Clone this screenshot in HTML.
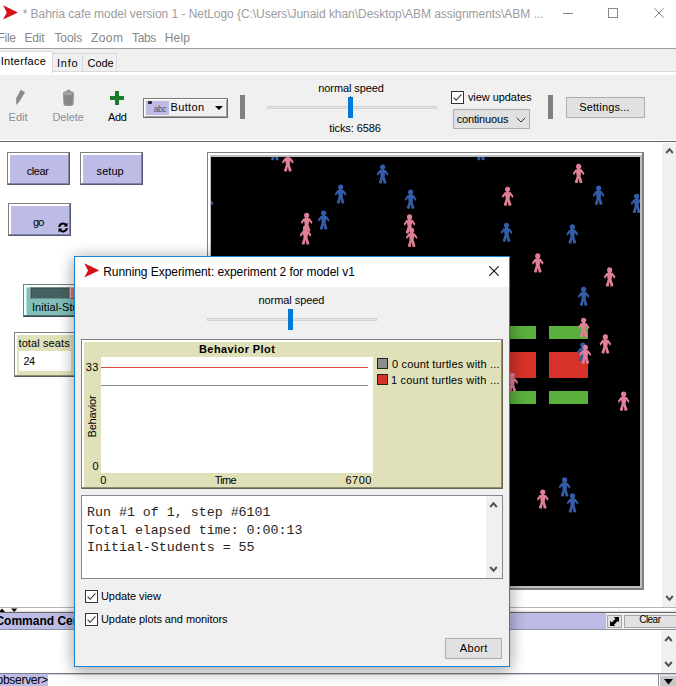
<!DOCTYPE html>
<html><head><meta charset="utf-8">
<style>
*{box-sizing:border-box;margin:0;padding:0}
html,body{width:676px;height:686px;overflow:hidden;background:#fff;font-family:"Liberation Sans","DejaVu Sans",sans-serif;font-size:11px;color:#000}
.abs{position:absolute}
#root{position:relative;width:676px;height:686px;overflow:hidden;background:#fff}
.t{position:absolute;white-space:nowrap;line-height:1}
.nb{position:absolute;background:#bcbce6;border-style:solid;border-width:1px;border-color:#808080 #585874 #585874 #808080;box-shadow:inset -1px -1px 0 #8282aa, inset 2px 2px 0 #fff}
.wb{position:absolute;background:#e1e1e1;border:1px solid #adadad}
.cb{position:absolute;width:13px;height:13px;background:#fff;border:1px solid #333}
.sb{position:absolute;background:#f0f0f0}
</style></head><body><div id="root">

<!-- title bar -->
<svg class="abs" style="left:3px;top:5px" width="15" height="15" viewBox="0 0 15 15"><path d="M0 0.3 L15 7.4 L0 14.6 L3.8 7.4 Z" fill="#d8101a"/></svg>
<div class="t" style="left:22.70px;top:8.00px;font-size:12px;letter-spacing:-0.046px;color:#9c9c9c">* Bahria cafe model version 1 - NetLogo {C:\Users\Junaid khan\Desktop\ABM assignments\ABM ...</div>
<div class="abs" style="left:563px;top:13px;width:10px;height:1px;background:#8a8a8a"></div>
<div class="abs" style="left:608px;top:8px;width:10px;height:10px;border:1px solid #8a8a8a"></div>
<svg class="abs" style="left:654px;top:8px" width="10" height="10" viewBox="0 0 10 10"><path d="M0.3 0.3L9.7 9.7M9.7 0.3L0.3 9.7" stroke="#888" stroke-width="1" fill="none"/></svg>

<!-- menu -->
<div class="t" style="left:-2.50px;top:32.00px;font-size:12px;letter-spacing:-0.267px;color:#868686">File</div><div class="t" style="left:24.40px;top:32.00px;font-size:12px;letter-spacing:-0.133px;color:#868686">Edit</div><div class="t" style="left:54.40px;top:32.00px;font-size:12px;letter-spacing:-0.050px;color:#868686">Tools</div><div class="t" style="left:91.00px;top:32.00px;font-size:12px;letter-spacing:0.400px;color:#868686">Zoom</div><div class="t" style="left:132.00px;top:32.00px;font-size:12px;letter-spacing:-0.333px;color:#868686">Tabs</div><div class="t" style="left:164.70px;top:32.00px;font-size:12px;letter-spacing:0.200px;color:#868686">Help</div>
<div class="abs" style="left:0;top:48px;width:676px;height:1px;background:#a0a0a0"></div>

<!-- tabs -->
<div class="abs" style="left:0;top:49px;width:676px;height:23px;background:#f0f0f0"></div>
<div class="abs" style="left:52px;top:53px;width:31px;height:19px;background:#f0f0f0;border:1px solid #d9d9d9"></div>
<div class="abs" style="left:82px;top:53px;width:35px;height:19px;background:#f0f0f0;border:1px solid #d9d9d9"></div>
<div class="abs" style="left:0;top:71px;width:676px;height:1px;background:#d9d9d9"></div>
<div class="abs" style="left:-1px;top:51px;width:54px;height:22px;background:#fff;border:1px solid #d9d9d9;border-bottom:none"></div>
<div class="t" style="left:0.70px;top:56.00px;font-size:11px;letter-spacing:0.287px;">Interface</div><div class="t" style="left:57.00px;top:58.00px;font-size:11px;letter-spacing:0.733px;">Info</div><div class="t" style="left:87.60px;top:58.00px;font-size:11px;letter-spacing:-0.100px;">Code</div>

<!-- toolbar -->
<div class="abs" style="left:0;top:75px;width:676px;height:65px;background:#f0f0f0"></div>
<div class="abs" style="left:0;top:141px;width:676px;height:1px;background:#646464"></div>
<svg class="abs" style="left:14px;top:89px" width="12" height="17" viewBox="0 0 12 17"><path d="M6.8 0.8 L11 3.2 L5.6 12.2 L2.2 16 L2.2 9.3 Z" fill="#8a8a8a"/></svg>
<div class="t" style="left:8.60px;top:112.00px;font-size:11px;letter-spacing:0.000px;color:#8c8c9a">Edit</div>
<svg class="abs" style="left:62px;top:89px" width="13" height="18" viewBox="0 0 13 18"><path d="M1 4.5 Q1 2 6.5 2 Q12 2 12 4.5 L11.5 15 Q11.5 17 6.5 17 Q1.5 17 1.5 15 Z" fill="#8c8c8c"/><ellipse cx="6.5" cy="2" rx="2" ry="1.2" fill="#8c8c8c"/><ellipse cx="6.5" cy="4.4" rx="4.6" ry="1.5" fill="#a3a3a3"/><path d="M4 7V14.5M6.5 7.5V15M9 7V14.5" stroke="#7a7a7a" stroke-width="0.8"/></svg>
<div class="t" style="left:52.50px;top:112.00px;font-size:11px;letter-spacing:-0.120px;color:#8c8c9a">Delete</div>
<div class="abs" style="left:115px;top:91px;width:4px;height:14px;background:#1b7a2b"></div>
<div class="abs" style="left:110px;top:96px;width:14px;height:4px;background:#1b7a2b"></div>
<div class="t" style="left:107.90px;top:112.00px;font-size:11px;letter-spacing:-0.350px;">Add</div>
<!-- combo -->
<div class="abs" style="left:143px;top:98px;width:85px;height:20px;background:#f0f0f0;border:1px solid;border-color:#7a7a7a #6b6b6b #6b6b6b #7a7a7a;box-shadow:inset 1px 1px 0 #fff, inset -1px -1px 0 #a0a0a0"></div>
<div class="abs" style="left:146px;top:101px;width:23px;height:14px;background:#bcbce6"></div>
<div class="abs" style="left:148px;top:101px;width:4px;height:3px;background:#223;border-radius:1px"></div>
<div class="t" style="left:153.70px;top:105.00px;font-size:8.5px;letter-spacing:-0.500px;color:#505074">abc</div><div class="t" style="left:170.60px;top:102.00px;font-size:11px;letter-spacing:0.320px;">Button</div>
<svg class="abs" style="left:214px;top:105px" width="10" height="6" viewBox="0 0 10 6"><path d="M1 1H9L5 5Z" fill="#000"/></svg>
<div class="abs" style="left:240px;top:95px;width:5px;height:24px;background:#808080"></div>
<!-- speed slider -->
<div class="t" style="left:318.30px;top:83.00px;font-size:11px;letter-spacing:-0.100px;">normal speed</div>
<div class="abs" style="left:267px;top:106px;width:170px;height:3px;background:#e6e6e6;border:1px solid #d2d2d2"></div>
<div class="abs" style="left:348px;top:97px;width:5px;height:21px;background:#0078d7"></div>
<div class="abs" style="left:350px;top:96px;width:1px;height:1px;background:#4a5a78"></div>
<div class="t" style="left:329.20px;top:123.00px;font-size:11px;letter-spacing:-0.080px;">ticks: 6586</div>
<!-- view updates -->
<div class="cb" style="left:451px;top:91px"></div>
<svg class="abs" style="left:451px;top:91px" width="13" height="13" viewBox="0 0 13 13"><path d="M2.6 6.6L5.2 9.3L10.4 3.3" stroke="#333" stroke-width="1.05" fill="none"/></svg>
<div class="t" style="left:467.90px;top:92.00px;font-size:11px;letter-spacing:-0.055px;">view updates</div>
<div class="wb" style="left:453px;top:109px;width:77px;height:20px"></div>
<div class="t" style="left:456.70px;top:114.00px;font-size:11px;letter-spacing:-0.167px;">continuous</div>
<svg class="abs" style="left:516px;top:117px" width="10" height="6" viewBox="0 0 10 6"><path d="M0.7 0.7L5 5L9.3 0.7" stroke="#333" stroke-width="1" fill="none"/></svg>
<div class="abs" style="left:548px;top:95px;width:5px;height:24px;background:#808080"></div>
<div class="wb" style="left:566px;top:97px;width:79px;height:21px"></div>
<div class="t" style="left:579.20px;top:102.00px;font-size:11px;letter-spacing:0.140px;">Settings...</div>

<!-- main scrollbar -->
<div class="sb" style="left:662px;top:143px;width:14px;height:464px"></div>
<svg class="abs" style="left:665px;top:147px" width="9" height="7" viewBox="0 0 9 7"><path d="M1.2 6L4.5 2.2L7.8 6" stroke="#505050" stroke-width="2" fill="none"/></svg>
<svg class="abs" style="left:665px;top:595px" width="9" height="7" viewBox="0 0 9 7"><path d="M1.2 1L4.5 4.8L7.8 1" stroke="#505050" stroke-width="2" fill="none"/></svg>

<!-- widgets -->
<div class="nb" style="left:7px;top:152px;width:63px;height:33px"></div>
<div class="t" style="left:26.80px;top:166.00px;font-size:11px;letter-spacing:-0.450px;">clear</div>
<div class="nb" style="left:80px;top:152px;width:63px;height:33px"></div>
<div class="t" style="left:96.60px;top:166.00px;font-size:11px;letter-spacing:0.050px;">setup</div>
<div class="nb" style="left:8px;top:203px;width:63px;height:33px"></div>
<div class="t" style="left:33.00px;top:217.00px;font-size:11px;letter-spacing:-0.900px;">go</div>
<svg class="abs" style="left:58px;top:222px" width="10" height="11" viewBox="0 0 10 11"><path d="M1.2 5 A3.8 3.8 0 0 1 8 3 M8.8 6 A3.8 3.8 0 0 1 2 8" stroke="#000" stroke-width="2" fill="none"/><path d="M9.5 0.5V4.5H5.5Z M0.5 10.5V6.5H4.5Z" fill="#000"/></svg>

<!-- slider widget -->
<div class="abs" style="left:23px;top:284px;width:70px;height:33px;background:#83beba;border:1px solid;border-color:#7a7a7a #3c4846 #3c4846 #7a7a7a;box-shadow:inset -1px -1px 0 #4f7572, inset 2px 2px 0 #f2ffff, inset 3px 3px 0 #a8e6e2"></div>
<div class="abs" style="left:30px;top:287px;width:40px;height:12px;background:#446360;border:1px solid;border-color:#7f8a88 #6a908c #6a908c #7f8a88;box-shadow:inset 1px 1px 0 #3a5552"></div>
<div class="abs" style="left:70px;top:287px;width:6px;height:12px;background:#e07474;border:1px solid;border-color:#f0b0b0 #a04a4a #a04a4a #f0b0b0"></div>
<div class="t" style="left:31.90px;top:302.00px;font-size:11px;letter-spacing:0.093px;">Initial-Students</div>
<!-- monitor -->
<div class="abs" style="left:14px;top:332px;width:70px;height:45px;background:#e1e1b9;border:1px solid;border-color:#808080 #5a5a50 #5a5a50 #808080;box-shadow:inset -1px -1px 0 #8e8e74, inset 2px 2px 0 #fff"></div>
<div class="t" style="left:18.50px;top:338.00px;font-size:11px;letter-spacing:0.100px;">total seats</div>
<div class="abs" style="left:19px;top:351px;width:52px;height:20px;background:#fff"></div>
<div class="t" style="left:23.40px;top:356.00px;font-size:11px;letter-spacing:-0.400px;">24</div>

<!-- view -->
<div class="abs" style="left:207px;top:152px;width:437px;height:438px;background:#808080"></div>
<div class="abs" style="left:208px;top:153px;width:434px;height:435px;background:#fff"></div>
<div class="abs" style="left:210px;top:155px;width:432px;height:433px;background:#bebebe"></div>
<svg class="abs" style="left:211px;top:157px" width="429" height="429" viewBox="0 0 429 429">

<rect width="429" height="429" fill="#000"/>
<rect x="286" y="169" width="39" height="13" fill="#59b03c"/><rect x="338" y="169" width="39" height="13" fill="#59b03c"/>
<rect x="286" y="195" width="39" height="26" fill="#d73229"/><rect x="338" y="195" width="39" height="26" fill="#d73229"/>
<rect x="286" y="234" width="39" height="13" fill="#59b03c"/><rect x="338" y="234" width="39" height="13" fill="#59b03c"/>
<path transform="translate(54.1 -16.3) scale(0.0650)" fill="#345da9" d="M110 45a40 40 0 1 1 80 0a40 40 0 1 1-80 0ZM195 90L180 195L210 285L195 300L165 300L150 225L135 300L105 300L90 285L120 195L105 90ZM127 79L172 79L172 94L127 94ZM195 90L240 150L225 180L165 105ZM135 105L75 180L60 150L105 90Z"/>
<path transform="translate(67.1 -5.0) scale(0.0650)" fill="#e07f96" d="M110 45a40 40 0 1 1 80 0a40 40 0 1 1-80 0ZM195 90L180 195L210 285L195 300L165 300L150 225L135 300L105 300L90 285L120 195L105 90ZM127 79L172 79L172 94L127 94ZM195 90L240 150L225 180L165 105ZM135 105L75 180L60 150L105 90Z"/>
<path transform="translate(119.9 27.1) scale(0.0650)" fill="#345da9" d="M110 45a40 40 0 1 1 80 0a40 40 0 1 1-80 0ZM195 90L180 195L210 285L195 300L165 300L150 225L135 300L105 300L90 285L120 195L105 90ZM127 79L172 79L172 94L127 94ZM195 90L240 150L225 180L165 105ZM135 105L75 180L60 150L105 90Z"/>
<path transform="translate(-13.2 36.7) scale(0.0650)" fill="#345da9" d="M110 45a40 40 0 1 1 80 0a40 40 0 1 1-80 0ZM195 90L180 195L210 285L195 300L165 300L150 225L135 300L105 300L90 285L120 195L105 90ZM127 79L172 79L172 94L127 94ZM195 90L240 150L225 180L165 105ZM135 105L75 180L60 150L105 90Z"/>
<path transform="translate(102.9 53.1) scale(0.0650)" fill="#345da9" d="M110 45a40 40 0 1 1 80 0a40 40 0 1 1-80 0ZM195 90L180 195L210 285L195 300L165 300L150 225L135 300L105 300L90 285L120 195L105 90ZM127 79L172 79L172 94L127 94ZM195 90L240 150L225 180L165 105ZM135 105L75 180L60 150L105 90Z"/>
<path transform="translate(85.9 55.3) scale(0.0650)" fill="#e07f96" d="M110 45a40 40 0 1 1 80 0a40 40 0 1 1-80 0ZM195 90L180 195L210 285L195 300L165 300L150 225L135 300L105 300L90 285L120 195L105 90ZM127 79L172 79L172 94L127 94ZM195 90L240 150L225 180L165 105ZM135 105L75 180L60 150L105 90Z"/>
<path transform="translate(84.8 68.1) scale(0.0650)" fill="#e07f96" d="M110 45a40 40 0 1 1 80 0a40 40 0 1 1-80 0ZM195 90L180 195L210 285L195 300L165 300L150 225L135 300L105 300L90 285L120 195L105 90ZM127 79L172 79L172 94L127 94ZM195 90L240 150L225 180L165 105ZM135 105L75 180L60 150L105 90Z"/>
<path transform="translate(161.9 7.1) scale(0.0650)" fill="#345da9" d="M110 45a40 40 0 1 1 80 0a40 40 0 1 1-80 0ZM195 90L180 195L210 285L195 300L165 300L150 225L135 300L105 300L90 285L120 195L105 90ZM127 79L172 79L172 94L127 94ZM195 90L240 150L225 180L165 105ZM135 105L75 180L60 150L105 90Z"/>
<path transform="translate(189.9 32.2) scale(0.0650)" fill="#345da9" d="M110 45a40 40 0 1 1 80 0a40 40 0 1 1-80 0ZM195 90L180 195L210 285L195 300L165 300L150 225L135 300L105 300L90 285L120 195L105 90ZM127 79L172 79L172 94L127 94ZM195 90L240 150L225 180L165 105ZM135 105L75 180L60 150L105 90Z"/>
<path transform="translate(188.8 57.0) scale(0.0650)" fill="#e07f96" d="M110 45a40 40 0 1 1 80 0a40 40 0 1 1-80 0ZM195 90L180 195L210 285L195 300L165 300L150 225L135 300L105 300L90 285L120 195L105 90ZM127 79L172 79L172 94L127 94ZM195 90L240 150L225 180L165 105ZM135 105L75 180L60 150L105 90Z"/>
<path transform="translate(190.9 70.4) scale(0.0650)" fill="#e07f96" d="M110 45a40 40 0 1 1 80 0a40 40 0 1 1-80 0ZM195 90L180 195L210 285L195 300L165 300L150 225L135 300L105 300L90 285L120 195L105 90ZM127 79L172 79L172 94L127 94ZM195 90L240 150L225 180L165 105ZM135 105L75 180L60 150L105 90Z"/>
<path transform="translate(260.2 -16.3) scale(0.0650)" fill="#345da9" d="M110 45a40 40 0 1 1 80 0a40 40 0 1 1-80 0ZM195 90L180 195L210 285L195 300L165 300L150 225L135 300L105 300L90 285L120 195L105 90ZM127 79L172 79L172 94L127 94ZM195 90L240 150L225 180L165 105ZM135 105L75 180L60 150L105 90Z"/>
<path transform="translate(357.9 6.5) scale(0.0650)" fill="#e07f96" d="M110 45a40 40 0 1 1 80 0a40 40 0 1 1-80 0ZM195 90L180 195L210 285L195 300L165 300L150 225L135 300L105 300L90 285L120 195L105 90ZM127 79L172 79L172 94L127 94ZM195 90L240 150L225 180L165 105ZM135 105L75 180L60 150L105 90Z"/>
<path transform="translate(286.9 29.3) scale(0.0650)" fill="#e07f96" d="M110 45a40 40 0 1 1 80 0a40 40 0 1 1-80 0ZM195 90L180 195L210 285L195 300L165 300L150 225L135 300L105 300L90 285L120 195L105 90ZM127 79L172 79L172 94L127 94ZM195 90L240 150L225 180L165 105ZM135 105L75 180L60 150L105 90Z"/>
<path transform="translate(377.9 28.2) scale(0.0650)" fill="#345da9" d="M110 45a40 40 0 1 1 80 0a40 40 0 1 1-80 0ZM195 90L180 195L210 285L195 300L165 300L150 225L135 300L105 300L90 285L120 195L105 90ZM127 79L172 79L172 94L127 94ZM195 90L240 150L225 180L165 105ZM135 105L75 180L60 150L105 90Z"/>
<path transform="translate(415.9 36.4) scale(0.0650)" fill="#345da9" d="M110 45a40 40 0 1 1 80 0a40 40 0 1 1-80 0ZM195 90L180 195L210 285L195 300L165 300L150 225L135 300L105 300L90 285L120 195L105 90ZM127 79L172 79L172 94L127 94ZM195 90L240 150L225 180L165 105ZM135 105L75 180L60 150L105 90Z"/>
<path transform="translate(285.8 65.3) scale(0.0650)" fill="#345da9" d="M110 45a40 40 0 1 1 80 0a40 40 0 1 1-80 0ZM195 90L180 195L210 285L195 300L165 300L150 225L135 300L105 300L90 285L120 195L105 90ZM127 79L172 79L172 94L127 94ZM195 90L240 150L225 180L165 105ZM135 105L75 180L60 150L105 90Z"/>
<path transform="translate(351.6 67.0) scale(0.0650)" fill="#345da9" d="M110 45a40 40 0 1 1 80 0a40 40 0 1 1-80 0ZM195 90L180 195L210 285L195 300L165 300L150 225L135 300L105 300L90 285L120 195L105 90ZM127 79L172 79L172 94L127 94ZM195 90L240 150L225 180L165 105ZM135 105L75 180L60 150L105 90Z"/>
<path transform="translate(317.0 96.0) scale(0.0650)" fill="#e07f96" d="M110 45a40 40 0 1 1 80 0a40 40 0 1 1-80 0ZM195 90L180 195L210 285L195 300L165 300L150 225L135 300L105 300L90 285L120 195L105 90ZM127 79L172 79L172 94L127 94ZM195 90L240 150L225 180L165 105ZM135 105L75 180L60 150L105 90Z"/>
<path transform="translate(388.9 110.0) scale(0.0650)" fill="#e07f96" d="M110 45a40 40 0 1 1 80 0a40 40 0 1 1-80 0ZM195 90L180 195L210 285L195 300L165 300L150 225L135 300L105 300L90 285L120 195L105 90ZM127 79L172 79L172 94L127 94ZM195 90L240 150L225 180L165 105ZM135 105L75 180L60 150L105 90Z"/>
<path transform="translate(362.9 129.3) scale(0.0650)" fill="#345da9" d="M110 45a40 40 0 1 1 80 0a40 40 0 1 1-80 0ZM195 90L180 195L210 285L195 300L165 300L150 225L135 300L105 300L90 285L120 195L105 90ZM127 79L172 79L172 94L127 94ZM195 90L240 150L225 180L165 105ZM135 105L75 180L60 150L105 90Z"/>
<path transform="translate(362.9 160.4) scale(0.0650)" fill="#e07f96" d="M110 45a40 40 0 1 1 80 0a40 40 0 1 1-80 0ZM195 90L180 195L210 285L195 300L165 300L150 225L135 300L105 300L90 285L120 195L105 90ZM127 79L172 79L172 94L127 94ZM195 90L240 150L225 180L165 105ZM135 105L75 180L60 150L105 90Z"/>
<path transform="translate(384.6 177.0) scale(0.0650)" fill="#e07f96" d="M110 45a40 40 0 1 1 80 0a40 40 0 1 1-80 0ZM195 90L180 195L210 285L195 300L165 300L150 225L135 300L105 300L90 285L120 195L105 90ZM127 79L172 79L172 94L127 94ZM195 90L240 150L225 180L165 105ZM135 105L75 180L60 150L105 90Z"/>
<path transform="translate(362.2 185.1) scale(0.0650)" fill="#345da9" d="M110 45a40 40 0 1 1 80 0a40 40 0 1 1-80 0ZM195 90L180 195L210 285L195 300L165 300L150 225L135 300L105 300L90 285L120 195L105 90ZM127 79L172 79L172 94L127 94ZM195 90L240 150L225 180L165 105ZM135 105L75 180L60 150L105 90Z"/>
<path transform="translate(364.6 187.3) scale(0.0650)" fill="#e07f96" d="M110 45a40 40 0 1 1 80 0a40 40 0 1 1-80 0ZM195 90L180 195L210 285L195 300L165 300L150 225L135 300L105 300L90 285L120 195L105 90ZM127 79L172 79L172 94L127 94ZM195 90L240 150L225 180L165 105ZM135 105L75 180L60 150L105 90Z"/>
<path transform="translate(291.5 215.3) scale(0.0650)" fill="#e07f96" d="M110 45a40 40 0 1 1 80 0a40 40 0 1 1-80 0ZM195 90L180 195L210 285L195 300L165 300L150 225L135 300L105 300L90 285L120 195L105 90ZM127 79L172 79L172 94L127 94ZM195 90L240 150L225 180L165 105ZM135 105L75 180L60 150L105 90Z"/>
<path transform="translate(402.9 234.2) scale(0.0650)" fill="#e07f96" d="M110 45a40 40 0 1 1 80 0a40 40 0 1 1-80 0ZM195 90L180 195L210 285L195 300L165 300L150 225L135 300L105 300L90 285L120 195L105 90ZM127 79L172 79L172 94L127 94ZM195 90L240 150L225 180L165 105ZM135 105L75 180L60 150L105 90Z"/>
<path transform="translate(343.9 320.0) scale(0.0650)" fill="#345da9" d="M110 45a40 40 0 1 1 80 0a40 40 0 1 1-80 0ZM195 90L180 195L210 285L195 300L165 300L150 225L135 300L105 300L90 285L120 195L105 90ZM127 79L172 79L172 94L127 94ZM195 90L240 150L225 180L165 105ZM135 105L75 180L60 150L105 90Z"/>
<path transform="translate(351.8 335.9) scale(0.0650)" fill="#345da9" d="M110 45a40 40 0 1 1 80 0a40 40 0 1 1-80 0ZM195 90L180 195L210 285L195 300L165 300L150 225L135 300L105 300L90 285L120 195L105 90ZM127 79L172 79L172 94L127 94ZM195 90L240 150L225 180L165 105ZM135 105L75 180L60 150L105 90Z"/>
<path transform="translate(322.0 332.1) scale(0.0650)" fill="#e07f96" d="M110 45a40 40 0 1 1 80 0a40 40 0 1 1-80 0ZM195 90L180 195L210 285L195 300L165 300L150 225L135 300L105 300L90 285L120 195L105 90ZM127 79L172 79L172 94L127 94ZM195 90L240 150L225 180L165 105ZM135 105L75 180L60 150L105 90Z"/>
</svg>

<!-- command center -->
<div class="abs" style="left:0;top:607px;width:676px;height:1px;background:#b4b4b4"></div>
<div class="abs" style="left:0;top:608px;width:676px;height:4px;background:linear-gradient(#fff,#fff 50%,#ececec 75%,#d4d4d4)"></div>
<div class="abs" style="left:0;top:612px;width:676px;height:1px;background:#686868"></div>
<svg class="abs" style="left:-1px;top:608px" width="19" height="4" viewBox="0 0 19 4"><path d="M0 4L3 0.5L6 4Z M12 0.5H18.4L15.2 4Z" fill="#000"/></svg>
<div class="abs" style="left:0;top:613px;width:676px;height:16px;background:#f0f0f0"></div>
<div class="abs" style="left:0;top:613px;width:606px;height:16px;background:#bcbce6"></div>
<div class="abs" style="left:0;top:629px;width:676px;height:1px;background:#8c93a3"></div>
<div class="t" style="left:-4.60px;top:615.00px;font-size:12px;letter-spacing:0.000px;font-weight:bold">Command Center</div>
<div class="abs" style="left:607px;top:615px;width:15px;height:13px;background:#e1e1e1;border:1px solid #a6a6a6"></div>
<svg class="abs" style="left:609.5px;top:616.8px" width="9.5" height="9.4" viewBox="0 0 10 10"><path d="M4 0H10V6L8.2 4.2L4.2 8.2L6 10H0V4L1.8 5.8L5.8 1.8Z" fill="#000"/></svg>
<div class="abs" style="left:624px;top:615px;width:56px;height:13px;background:#e1e1e1;border:1px solid #a6a6a6"></div>
<div class="t" style="left:639.20px;top:615.00px;font-size:10px;letter-spacing:-0.525px;">Clear</div>
<div class="abs" style="left:0;top:630px;width:661px;height:43px;background:#fff"></div>
<div class="sb" style="left:661px;top:630px;width:15px;height:43px"></div>
<svg class="abs" style="left:664px;top:635px" width="9" height="7" viewBox="0 0 9 7"><path d="M1.2 6L4.5 2.2L7.8 6" stroke="#505050" stroke-width="2" fill="none"/></svg>
<svg class="abs" style="left:664px;top:661px" width="9" height="7" viewBox="0 0 9 7"><path d="M1.2 1L4.5 4.8L7.8 1" stroke="#505050" stroke-width="2" fill="none"/></svg>
<div class="abs" style="left:0;top:673px;width:676px;height:1px;background:#787d88"></div>
<div class="abs" style="left:0;top:674px;width:676px;height:1px;background:#ccd0d6"></div>
<div class="abs" style="left:-2px;top:674px;width:50px;height:13px;background:#bcbce6"></div>
<div class="t" style="left:-3.50px;top:674.00px;font-size:12px;letter-spacing:-0.275px;">observer&gt;</div>
<div class="abs" style="left:658px;top:674px;width:1px;height:12px;background:#858c98"></div>
<div class="abs" style="left:660px;top:675px;width:16px;height:11px;background:#c8c8c8;border-top:1px solid #e8e8e8"></div>
<svg class="abs" style="left:664px;top:679px" width="9" height="5.5" viewBox="0 0 9 5.5"><path d="M0 0H9L4.5 5.5Z" fill="#000"/></svg>

<!-- dialog -->
<div class="abs" style="left:74px;top:256px;width:436px;height:411px;background:#f0f0f0;border:1px solid #1883d7;box-shadow:0 0 16px 0 rgba(0,0,0,0.19), 0 5px 14px 1px rgba(0,0,0,0.22)"></div>
<div class="abs" style="left:75px;top:257px;width:434px;height:30px;background:#fff"></div>
<svg class="abs" style="left:83.5px;top:263px" width="15.5" height="15" viewBox="0 0 15 15"><path d="M0 0.3 L15 7.4 L0 14.6 L3.8 7.4 Z" fill="#d8101a"/></svg>
<div class="t" style="left:103.20px;top:266.00px;font-size:12px;letter-spacing:-0.057px;">Running Experiment: experiment 2 for model v1</div>
<svg class="abs" style="left:489px;top:266px" width="10" height="10" viewBox="0 0 10 10"><path d="M0.3 0.3L9.7 9.7M9.7 0.3L0.3 9.7" stroke="#111" stroke-width="1.1" fill="none"/></svg>
<div class="t" style="left:258.50px;top:295.00px;font-size:11px;letter-spacing:-0.064px;">normal speed</div>
<div class="abs" style="left:207px;top:318px;width:170px;height:3px;background:#e6e6e6;border:1px solid #d2d2d2"></div>
<div class="abs" style="left:288px;top:309px;width:5px;height:21px;background:#0078d7"></div>

<!-- plot -->
<div class="abs" style="left:81px;top:339px;width:422px;height:150px;background:#e1e1b9;border:1px solid;border-color:#808080 #66664e #66664e #808080;box-shadow:inset -1px -1px 0 #8e8e72, inset 2px 2px 0 #fff"></div>
<div class="t" style="left:199.00px;top:344.00px;font-size:11px;letter-spacing:0.408px;font-weight:bold">Behavior Plot</div>
<div class="abs" style="left:101px;top:357px;width:272px;height:116px;background:#fff"></div>
<div class="abs" style="left:101px;top:367px;width:267px;height:1px;background:#d84a40"></div>
<div class="abs" style="left:101px;top:385px;width:267px;height:1px;background:#8d8d8d"></div>
<div class="t" style="left:85.80px;top:362.00px;font-size:11px;letter-spacing:0.400px;">33</div><div class="t" style="left:92.60px;top:461.00px;font-size:11px;letter-spacing:0.000px;">0</div><div class="t" style="left:100.20px;top:475.00px;font-size:11px;letter-spacing:0.000px;">0</div><div class="t" style="left:214.70px;top:475.00px;font-size:11px;letter-spacing:-0.733px;">Time</div><div class="t" style="left:345.50px;top:475.00px;font-size:11px;letter-spacing:0.500px;">6700</div>
<div class="t" style="left:67.5px;top:411px;font-size:11px;letter-spacing:-0.17px;transform:rotate(-90deg);transform-origin:center;width:48px;text-align:center">Behavior</div>
<div class="abs" style="left:377px;top:358px;width:11px;height:11px;background:#8d8d8d;border:1px solid #222"></div>
<div class="t" style="left:392.00px;top:359.00px;font-size:11px;letter-spacing:0.152px;">0 count turtles with ...</div>
<div class="abs" style="left:377px;top:374px;width:11px;height:11px;background:#d73229;border:1px solid #222"></div>
<div class="t" style="left:391.00px;top:375.00px;font-size:11px;letter-spacing:0.196px;">1 count turtles with ...</div>

<!-- text area -->
<div class="abs" style="left:81px;top:495px;width:422px;height:84px;background:#fff;border:1px solid #828790"></div>
<div class="sb" style="left:486px;top:496px;width:16px;height:82px"></div>
<svg class="abs" style="left:489px;top:501px" width="9" height="7" viewBox="0 0 9 7"><path d="M1.2 6L4.5 2.2L7.8 6" stroke="#505050" stroke-width="2" fill="none"/></svg>
<svg class="abs" style="left:489px;top:566px" width="9" height="7" viewBox="0 0 9 7"><path d="M1.2 1L4.5 4.8L7.8 1" stroke="#505050" stroke-width="2" fill="none"/></svg>
<div class="t" style="left:87px;top:506px;font-size:13.3px;font-family:'Liberation Mono',monospace;white-space:pre;color:#262626">Run #1 of 1, step #6101</div>
<div class="t" style="left:87px;top:524px;font-size:13.3px;font-family:'Liberation Mono',monospace;white-space:pre;color:#262626">Total elapsed time: 0:00:13</div>
<div class="t" style="left:87px;top:541px;font-size:13.3px;font-family:'Liberation Mono',monospace;white-space:pre;color:#262626">Initial-Students = 55</div>

<div class="cb" style="left:85px;top:590px"></div>
<svg class="abs" style="left:85px;top:590px" width="13" height="13" viewBox="0 0 13 13"><path d="M2.6 6.6L5.2 9.3L10.4 3.3" stroke="#333" stroke-width="1.05" fill="none"/></svg>
<div class="t" style="left:101.00px;top:591.00px;font-size:11px;letter-spacing:-0.070px;">Update view</div>
<div class="cb" style="left:85px;top:613px"></div>
<svg class="abs" style="left:85px;top:613px" width="13" height="13" viewBox="0 0 13 13"><path d="M2.6 6.6L5.2 9.3L10.4 3.3" stroke="#333" stroke-width="1.05" fill="none"/></svg>
<div class="t" style="left:101.00px;top:614.00px;font-size:11px;letter-spacing:-0.079px;">Update plots and monitors</div>
<div class="wb" style="left:445px;top:638px;width:57px;height:21px"></div>
<div class="t" style="left:459.80px;top:643.00px;font-size:11px;letter-spacing:0.325px;">Abort</div>

</div></body></html>
